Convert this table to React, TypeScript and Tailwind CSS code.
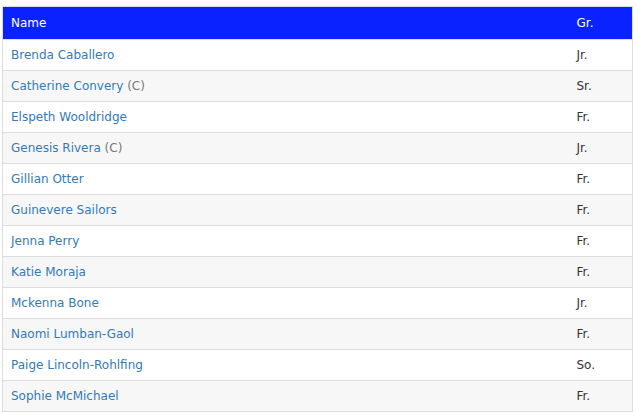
const roster: { name: string; captain?: boolean; gr: string }[] = [
  { name: "Brenda Caballero", gr: "Jr." },
  { name: "Catherine Convery", captain: true, gr: "Sr." },
  { name: "Elspeth Wooldridge", gr: "Fr." },
  { name: "Genesis Rivera", captain: true, gr: "Jr." },
  { name: "Gillian Otter", gr: "Fr." },
  { name: "Guinevere Sailors", gr: "Fr." },
  { name: "Jenna Perry", gr: "Fr." },
  { name: "Katie Moraja", gr: "Fr." },
  { name: "Mckenna Bone", gr: "Jr." },
  { name: "Naomi Lumban-Gaol", gr: "Fr." },
  { name: "Paige Lincoln-Rohlfing", gr: "So." },
  { name: "Sophie McMichael", gr: "Fr." },
];

export default function App() {
  return (
    <div className="w-[637px] h-[419px] bg-white pt-[6px] pl-[2px] font-['DejaVu_Sans',Verdana,sans-serif] text-[12px] text-[#333]">
      <table className="w-[631px] border-collapse border border-[#ddd]">
        <thead>
          <tr className="bg-[#0a22ff] text-white h-[33px]">
            <th className="text-left font-normal px-[8px] align-middle">Name</th>
            <th className="text-left font-normal px-[8px] w-[64px] align-middle">Gr.</th>
          </tr>
        </thead>
        <tbody>
          {roster.map((p, i) => (
            <tr key={p.name} className={`h-[31px] border-t border-[#ddd] ${i % 2 === 1 ? "bg-[#f7f7f7]" : "bg-white"}`}>
              <td className="px-[8px] align-middle">
                <a href="#" className="text-[#337ab7]">{p.name}</a>
                {p.captain && <span className="text-[#777]"> (C)</span>}
              </td>
              <td className="px-[8px] align-middle">{p.gr}</td>
            </tr>
          ))}
        </tbody>
      </table>
    </div>
  );
}
